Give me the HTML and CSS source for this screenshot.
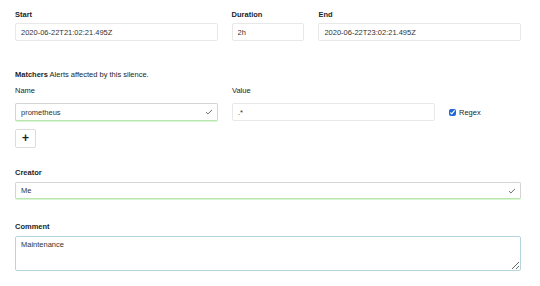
FILE: index.html
```html
<!DOCTYPE html>
<html lang="en">
<head>
    <meta charset="UTF-8">
    <title>New Silence</title>
    <link rel="stylesheet" href="styles.css">
</head>
<body>
    <form class="silence-form">
        <div class="row">
            <div class="field field-wide">
                <label class="title">Start</label>
                <input type="text" value="2020-06-22T21:02:21.495Z">
            </div>
            <div class="field field-short">
                <label class="title">Duration</label>
                <input type="text" value="2h">
            </div>
            <div class="field field-wide">
                <label class="title">End</label>
                <input type="text" value="2020-06-22T23:02:21.495Z">
            </div>
        </div>

        <div class="matchers">
            <p class="section-note"><strong>Matchers</strong> Alerts affected by this silence.</p>
            <div class="row">
                <div class="field field-half">
                    <label class="plain">Name</label>
                    <div class="valid-wrap">
                        <input type="text" class="valid" value="prometheus">
                        <svg class="check" viewBox="0 0 10 8"><path d="M1 4.2 L3.6 6.6 L9 1.2" fill="none" stroke="#666" stroke-width="1.3"/></svg>
                    </div>
                </div>
                <div class="field field-half">
                    <label class="plain">Value</label>
                    <input type="text" value=".*">
                </div>
                <label class="regex"><input type="checkbox" checked> Regex</label>
            </div>
            <button type="button" class="add-btn">+</button>
        </div>

        <div class="field block creator">
            <label class="title">Creator</label>
            <div class="valid-wrap">
                <input type="text" class="valid" value="Me">
                <svg class="check" viewBox="0 0 10 8"><path d="M1 4.2 L3.6 6.6 L9 1.2" fill="none" stroke="#666" stroke-width="1.3"/></svg>
            </div>
        </div>

        <div class="field block comment-field">
            <label class="title">Comment</label>
            <textarea class="comment">Maintenance</textarea>
        </div>
    </form>
</body>
</html>
```

FILE: styles.css
```css
body {
    margin: 0;
    padding: 10px 19px 0 15px;
    font-family: 'Liberation Sans', Arial, sans-serif;
    font-size: 7.5px;
    color: #212529;
    background: #fff;
}
.row {
    display: flex;
    gap: 14px;
    align-items: flex-end;
}
.field {
    display: flex;
    flex-direction: column;
}
.field label {
    display: block;
    margin-bottom: 3px;
    line-height: 10px;
}
.field .title {
    font-weight: bold;
}
.field .plain {
    margin-bottom: 7px;
}
.field-wide {
    width: 203px;
}
.field-short {
    width: 73px;
}
.field-half {
    width: 203px;
}
input[type="text"], textarea {
    box-sizing: border-box;
    width: 100%;
    height: 18px;
    padding: 0 5px;
    border: 1px solid #e8e8e8;
    border-radius: 2px;
    font-family: inherit;
    font-size: 7.5px;
    color: #333;
    background: #fff;
    outline: none;
}
.valid-wrap {
    position: relative;
}
input.valid {
    border-color: #d4d4d4;
    border-bottom-color: #b9e6b0;
    box-shadow: 0 1px 0 #d8f5d2;
}
.check {
    position: absolute;
    right: 5px;
    top: 6px;
    width: 8px;
    height: 6px;
}
.matchers {
    margin-top: 29px;
}
.section-note {
    margin: 0 0 6px;
    line-height: 10px;
}
.regex {
    display: flex;
    align-items: center;
    gap: 3px;
    height: 18px;
}
.regex input {
    margin: 0;
    width: 7px;
    height: 7px;
    accent-color: #2166d6;
}
.add-btn {
    display: block;
    margin-top: 8px;
    width: 21px;
    height: 19px;
    padding: 0;
    border: 1px solid #dcdcdc;
    border-radius: 2px;
    background: #fff;
    font-family: inherit;
    font-size: 12px;
    font-weight: bold;
    line-height: 15px;
    color: #222;
}
.creator {
    margin-top: 20px;
}
.creator label,
.comment-field label {
    margin-bottom: 4px;
}
.creator input.valid {
    height: 17px;
}
.comment-field {
    margin-top: 23px;
}
textarea.comment {
    height: 35px;
    padding: 3px 5px;
    border-color: #b6d4de;
    resize: vertical;
}
```
